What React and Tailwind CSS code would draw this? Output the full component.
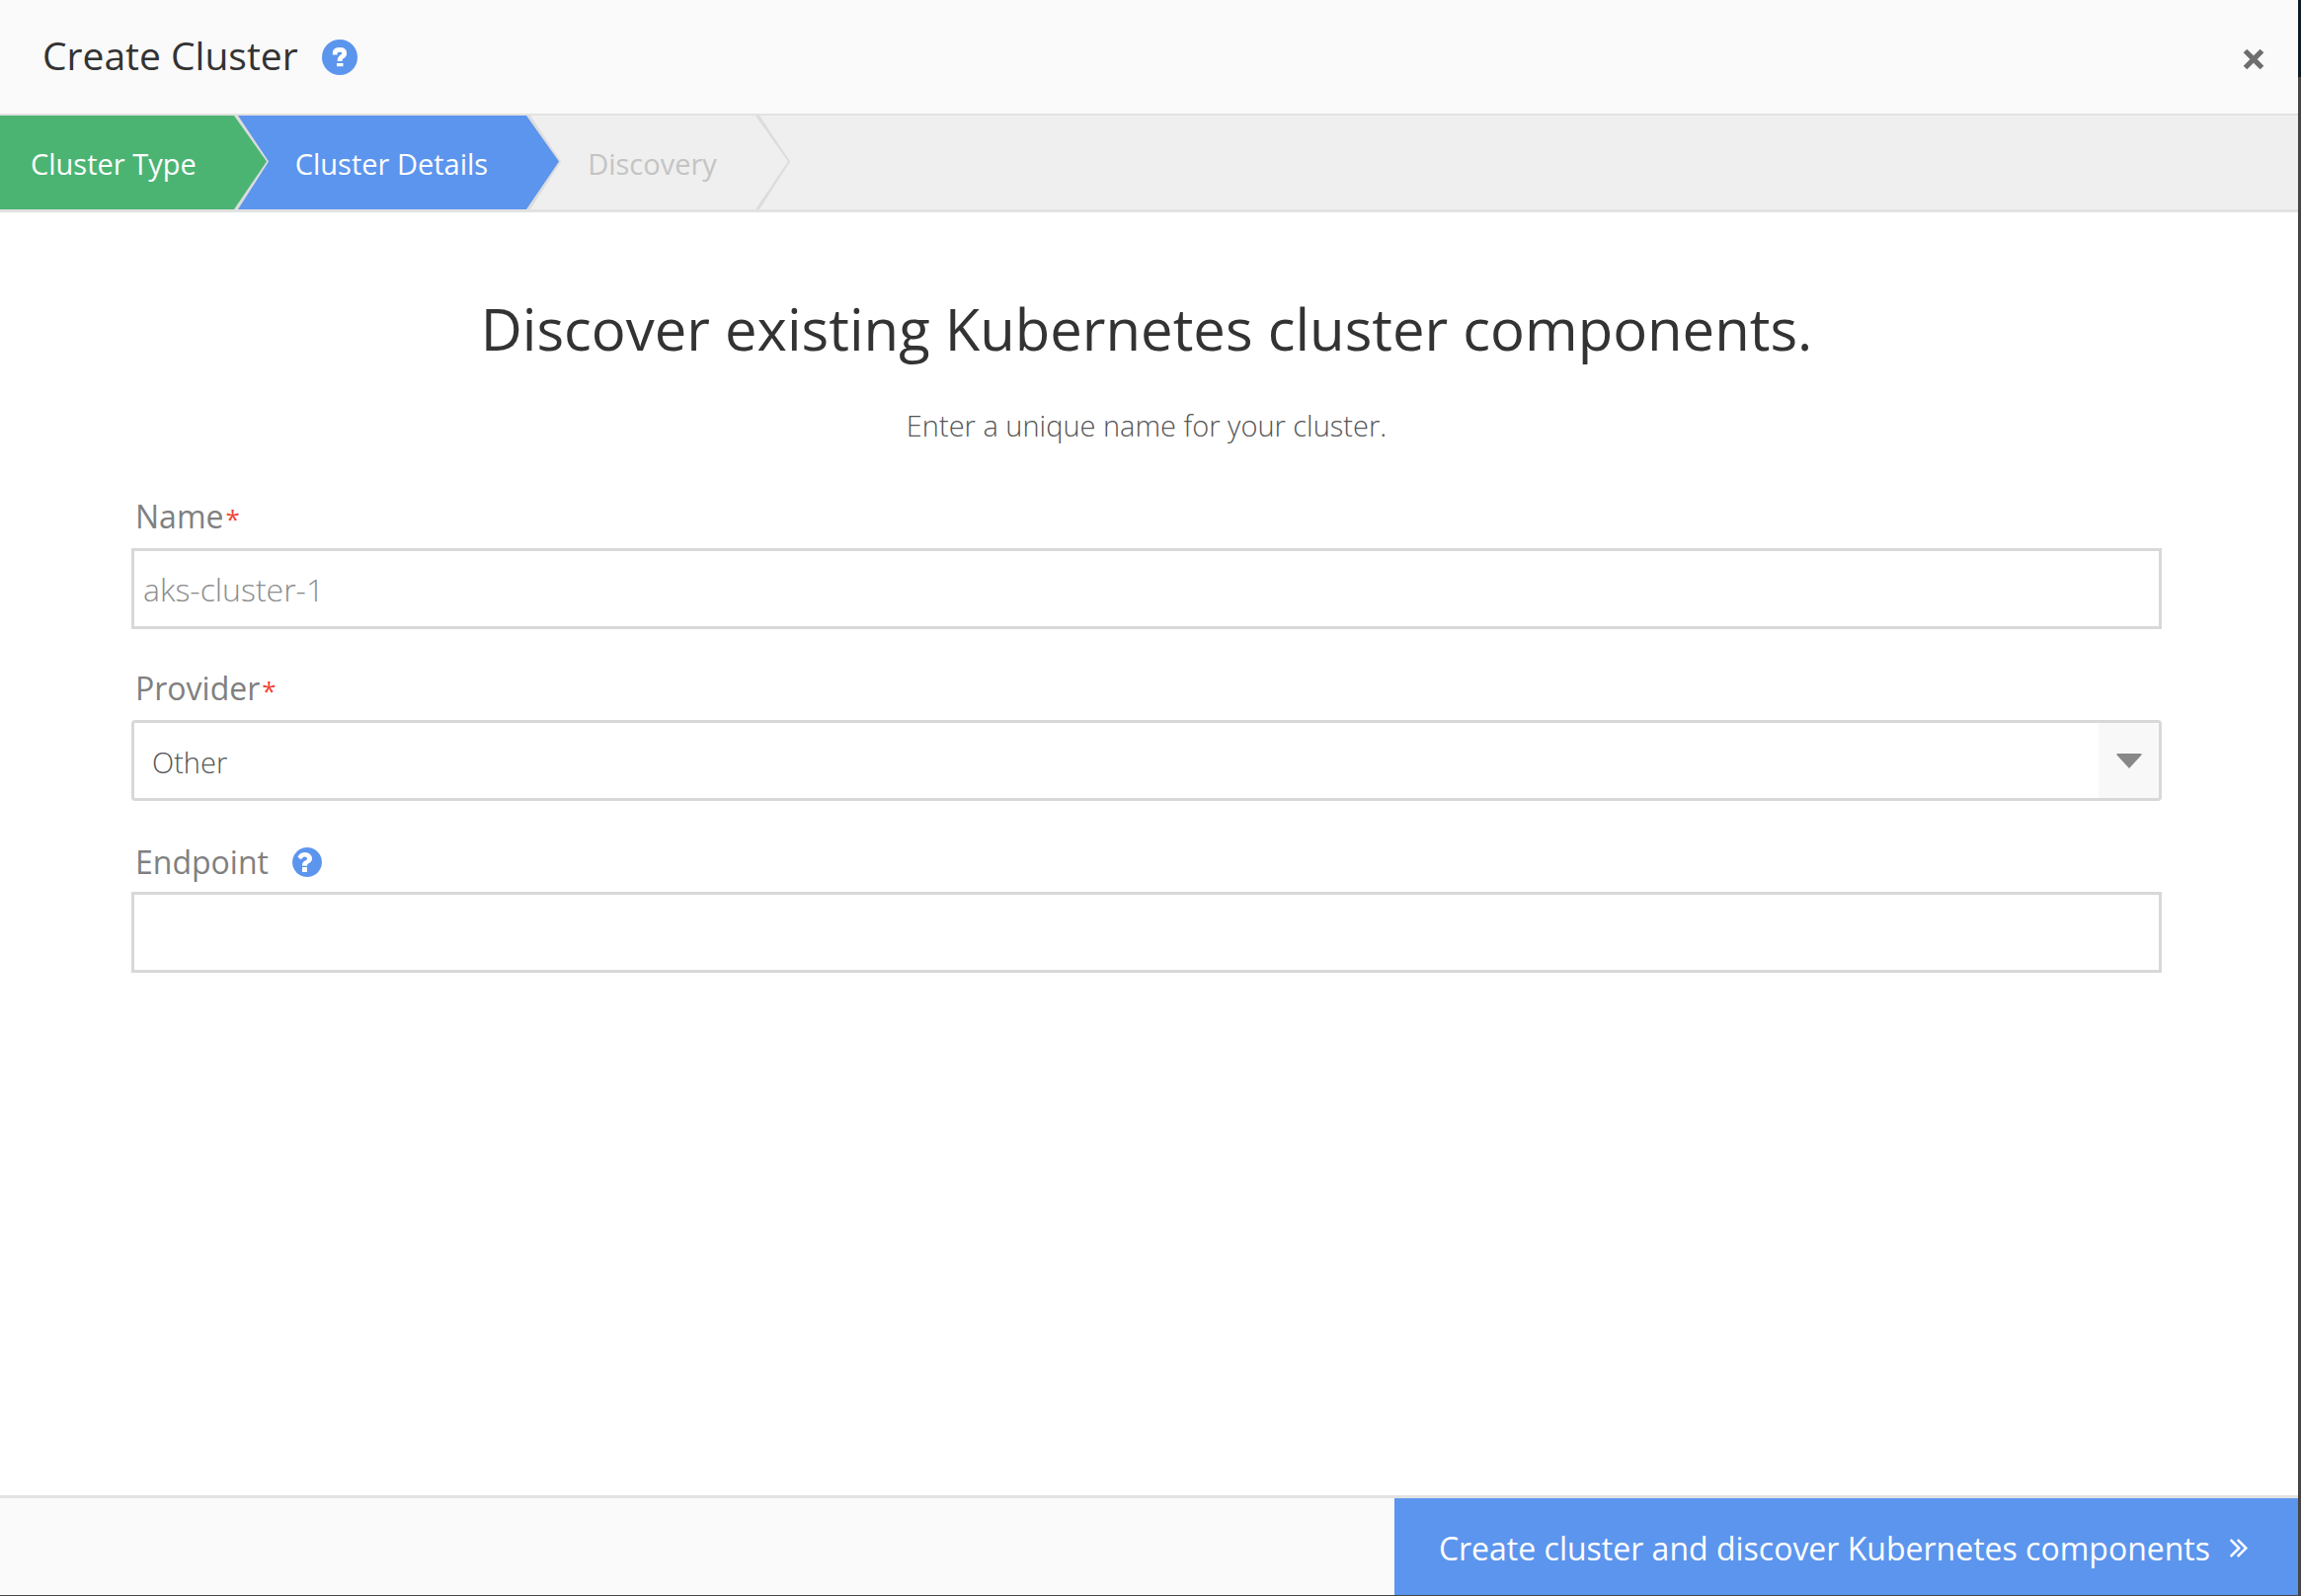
const ARROW = { green: "#4bb473", blue: "#5c95ed", idle: "#efefef" };

function StepArrow({ from, to }) {
  return (
    <svg width="35" height="95" viewBox="0 0 35 95" className="block shrink-0" aria-hidden="true">
      <rect width="35" height="95" fill={to} />
      <path d="M0 0H4L35 46.5L4 95H0Z" fill="#dcdcdc" />
      <path d="M0 0L33 46.5L0 95Z" fill={from} />
    </svg>
  );
}

function HelpIcon() {
  return (
    <svg viewBox="128 128 1536 1536" className="block size-[30px] fill-[#5c95ed]" aria-hidden="true">
      <path d="M896 1376v-192q0-14-9-23t-23-9h-192q-14 0-23 9t-9 23v192q0 14 9 23t23 9h192q14 0 23-9t9-23zm256-672q0-88-55.5-163t-138.5-116-170-41q-243 0-371 213-15 24 8 42l132 100q7 6 19 6 16 0 25-12 53-68 86-92 34-24 86-24 48 0 85.500 26t37.500 59q0 38-20 61t-68 45q-63 28-115.500 86.500t-52.500 125.500v36q0 14 9 23t23 9h192q14 0 23-9t9-23q0-19 21.500-49.500t54.500-49.500q32-18 49-28.500t46-35 44.500-48 28-60.500 12.500-81zm512 192q0 209-103 385.500t-279.500 279.500-385.500 103-385.500-103-279.500-279.500-103-385.500 103-385.500 279.500-279.500 385.500-103 385.500 103 279.500 279.500 103 385.500z" />
    </svg>
  );
}

function TitleHelpIcon() {
  return (
    <svg viewBox="0 0 36 36" className="block size-9" aria-hidden="true">
      <circle cx="18" cy="18" r="18" fill="#5c95ed" />
      <path d="M13.200 15.500V13.500Q13.500 10.300 18 10.300Q22.700 10.300 22.700 13.800Q22.700 16.300 20.300 17.300Q18 18.500 18 22" fill="none" stroke="#fff" strokeWidth="4.800" />
      <rect x="15" y="24" width="6.500" height="3.200" fill="#fff" />
    </svg>
  );
}

function Label({ htmlFor, children, required }) {
  return (
    <label htmlFor={htmlFor} className="flex pl-1 text-[32px] leading-[44px] text-[#808080]">
      {children}
      {required && <span className="ml-0.5 text-[26px] leading-[48px] text-[#f44336]">*</span>}
    </label>
  );
}

const field = "block h-[82px] w-full border-[3px] border-[#d8d8d8] bg-white font-light outline-none";

export default function App() {
  return (
    <div className="flex min-h-screen border-b border-[#444544] bg-[#444544] font-['Open_Sans',sans-serif]">
      <div className="flex grow flex-col bg-white">
        <header className="flex h-[117px] items-center border-b-2 border-[#e2e2e2] bg-[#fafafa] pl-[43px] pr-[34px]">
          <h1 className="pb-1 text-[39px] leading-[52px] text-[#333]">Create Cluster</h1>
          <button type="button" aria-label="Help" className="ml-6">
            <TitleHelpIcon />
          </button>
          <button type="button" aria-label="Close" className="ml-auto pt-1">
            <svg viewBox="0 0 22 22" className="block size-[22px]" aria-hidden="true">
              <path d="M2.500 2.500L19.500 19.500M19.500 2.500L2.500 19.500" fill="none" stroke="#6e6e6e" strokeWidth="5.200" />
            </svg>
          </button>
        </header>

        <nav aria-label="Steps" className="border-b-[3px] border-[#e2e2e2] bg-[#efefef]">
          <ol className="flex h-[95px] text-[29px] leading-[40px] text-white">
            <li className="flex">
              <button type="button" className="bg-[#4bb473] pt-0.5 pl-[31px] pr-[38px]">Cluster Type</button>
              <StepArrow from={ARROW.green} to={ARROW.blue} />
            </li>
            <li className="flex">
              <button type="button" aria-current="step" className="bg-[#5c95ed] pt-0.5 pl-[27px] pr-[39px]">Cluster Details</button>
              <StepArrow from={ARROW.blue} to={ARROW.idle} />
            </li>
            <li className="flex">
              <button type="button" className="pt-0.5 pl-[27px] pr-[39px] text-[#c4c4c4]">Discovery</button>
              <StepArrow from={ARROW.idle} to={ARROW.idle} />
            </li>
          </ol>
        </nav>

        <main className="grow pl-[133px] pr-[138px] pt-[78px]">
          <h2 className="text-center text-[58px] leading-[80px] text-[#333]">Discover existing Kubernetes cluster components.</h2>
          <p className="mt-[38px] text-center text-[29px] leading-[40px] font-light text-[#555]">Enter a unique name for your cluster.</p>
          <form className="mt-[50px] flex flex-col gap-[38px]">
            <div className="flex flex-col gap-1.5">
              <Label htmlFor="name" required>Name</Label>
              <input id="name" type="text" placeholder="aks-cluster-1" className={`${field} px-[9px] text-[32px] placeholder:text-[#8c8c8c]`} />
            </div>
            <div className="flex flex-col gap-1.5">
              <Label htmlFor="provider" required>Provider</Label>
              <div className="relative">
                <select id="provider" className={`${field} appearance-none rounded-sm px-[18px] pt-1 text-[29px] text-[#555]`}>
                  <option>Other</option>
                </select>
                <span className="pointer-events-none absolute inset-y-[3px] right-[3px] flex w-[61px] items-center justify-center bg-[#f8f8f8]">
                  <svg viewBox="0 0 26 15" className="block h-[15px] w-[26px] fill-[#888]" aria-hidden="true">
                    <path d="M2 0H24Q27 0 25 2L13 15L1 2Q-1 0 2 0Z" />
                  </svg>
                </span>
              </div>
            </div>
            <div className="flex flex-col gap-1.5">
              <div className="flex h-12 items-center gap-6">
                <Label htmlFor="endpoint">Endpoint</Label>
                <button type="button" aria-label="Endpoint help">
                  <HelpIcon />
                </button>
              </div>
              <input id="endpoint" type="text" className={`${field} px-[9px] text-[32px]`} />
            </div>
          </form>
        </main>

        <footer className="flex h-[101px] justify-end border-t-[3px] border-[#e2e2e2] bg-[#fafafa]">
          <button type="button" className="flex items-center gap-5 bg-[#5c95ed] pt-[3px] pl-[45px] pr-[51px] text-[32px] leading-[44px] text-white">
            Create cluster and discover Kubernetes components
            <svg viewBox="397 451 976 1018" className="block h-[19px] w-[18px] fill-white" aria-hidden="true">
              <path d="M979 960q0 13-10 23l-466 466q-10 10-23 10t-23-10l-50-50q-10-10-10-23t10-23l393-393-393-393q-10-10-10-23t10-23l50-50q10-10 23-10t23 10l466 466q10 10 10 23zm384 0q0 13-10 23l-466 466q-10 10-23 10t-23-10l-50-50q-10-10-10-23t10-23l393-393-393-393q-10-10-10-23t10-23l50-50q10-10 23-10t23 10l466 466q10 10 10 23z" />
            </svg>
          </button>
        </footer>
      </div>
      <div className="w-[3px] shrink-0">
        <div className="h-[78px] bg-[#0c1c28]" />
      </div>
    </div>
  );
}
